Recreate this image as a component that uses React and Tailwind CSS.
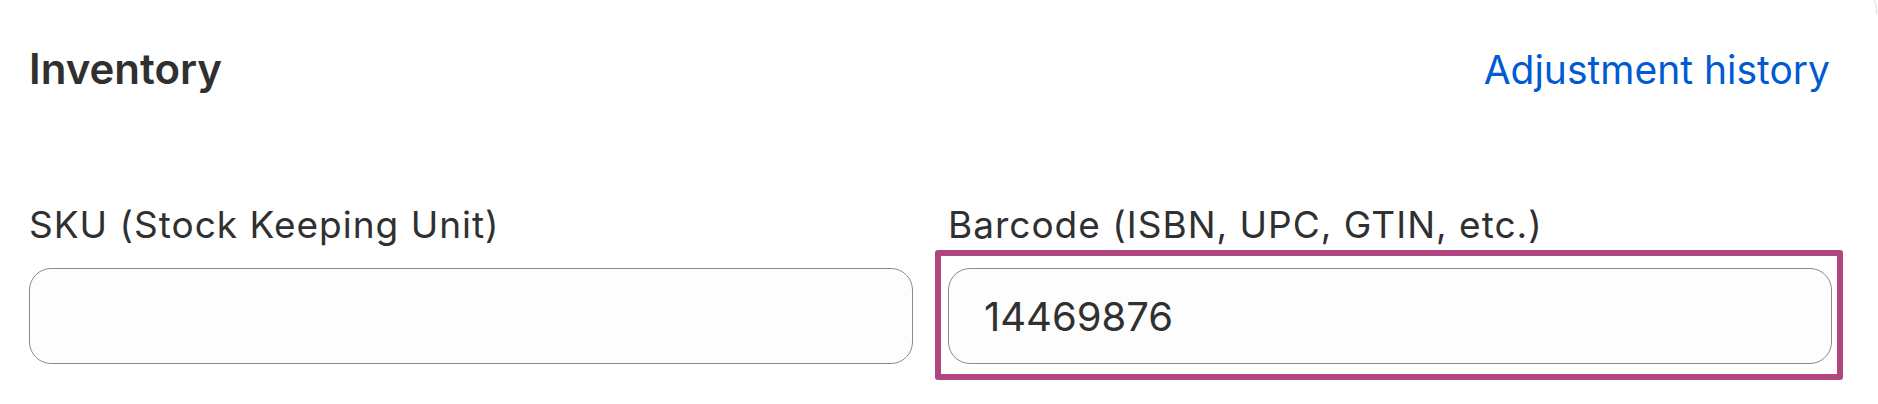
import React from "react";

const Field = ({ label, value, highlighted }) => {
  return (
    <div className="flex flex-col">
      <label className="text-[37px] leading-[42px] tracking-[1px] text-[#303030]">{label}</label>
      <div className="relative mt-[22px]">
        <input
          type="text"
          defaultValue={value}
          className="w-full h-[96px] rounded-[22px] border border-[#8a8a8a] bg-[#fdfdfd] px-[35px] text-[40px] text-[#303030] outline-none"
        />
        {highlighted && (
          <div className="absolute -left-[13px] -right-[11px] -top-[18px] -bottom-[16px] border-[6px] border-[#b0467f] rounded-[3px] pointer-events-none" />
        )}
      </div>
    </div>
  );
};

const App = () => {
  return (
    <div className="relative w-[1878px] h-[404px] overflow-hidden bg-white font-['Inter',sans-serif] text-[#303030]">
      {/* card corner peeking in at the top right */}
      <div className="absolute -top-[24px] right-[1px] w-[40px] h-[38px] rounded-tr-[36px] border-t border-r border-[#dedede]" />
      <div className="pl-[29px] pr-[46px] pt-[44px]">
        <div className="flex items-baseline justify-between">
          <h2 className="text-[42px] leading-[50px] font-semibold">Inventory</h2>
          <a href="#" className="text-[39px] leading-[50px] text-[#005bd3] mr-[2px]">
            Adjustment history
          </a>
        </div>
        <div className="grid grid-cols-2 gap-x-[35px] mt-[109px]">
          <Field label="SKU (Stock Keeping Unit)" value="" />
          <Field label="Barcode (ISBN, UPC, GTIN, etc.)" value="14469876" highlighted />
        </div>
      </div>
    </div>
  );
};

export default App;
